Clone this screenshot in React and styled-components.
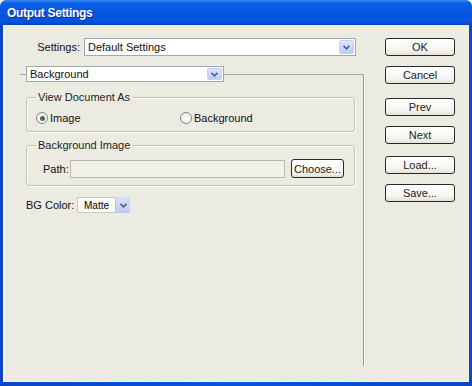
import React from "react";
import styled, { createGlobalStyle } from "styled-components";

const GlobalStyle = createGlobalStyle`
  html, body {
    margin: 0;
    padding: 0;
    overflow: hidden;
    background: #ecebe2;
  }
  * {
    box-sizing: border-box;
  }
`;

const Window = styled.div`
  width: 472px;
  height: 386px;
  display: flex;
  flex-direction: column;
  background: #0a4fd2;
  border-radius: 7px 7px 0 0;
  overflow: hidden;
  font-family: "Liberation Sans", Tahoma, sans-serif;
  font-size: 11px;
  color: #111;
`;

const TitleBar = styled.div`
  height: 25px;
  flex-shrink: 0;
  display: flex;
  align-items: center;
  padding-left: 7px;
  background: linear-gradient(
    to bottom,
    #3a8af6 0%,
    #0b5fe6 12%,
    #0757e0 45%,
    #0553dc 85%,
    #0444c0 100%
  );
  color: #fff;
  font-weight: bold;
  font-size: 12px;
  letter-spacing: -0.3px;
  text-shadow: 1px 1px 0 #0b2a8a;
`;

const Frame = styled.div`
  flex: 1;
  display: flex;
  padding: 0 3px 4px 3px;
  background: linear-gradient(to right, #0a46c8, #0855dc 50%, #0a46c8);
`;

const Body = styled.div`
  flex: 1;
  display: flex;
  background: #ecebe2;
  border-left: 2px solid #f8f7ee;
  border-bottom: 1px solid #f8f7ee;
`;

const Main = styled.div`
  width: 360px;
  display: flex;
  flex-direction: column;
  padding-top: 13px;
  padding-bottom: 15px;
`;

const Side = styled.div`
  flex: 1;
  display: flex;
  flex-direction: column;
  padding-left: 20px;
  padding-top: 13px;
`;

const Row = styled.div`
  display: flex;
  align-items: center;
  margin-left: ${(p) => p.$indent || 0}px;
  margin-top: ${(p) => p.$top || 0}px;
  height: ${(p) => p.$height || 18}px;
`;

const Label = styled.span`
  width: ${(p) => p.$width}px;
  text-align: ${(p) => p.$align || "left"};
  margin-right: ${(p) => p.$gap || 0}px;
  white-space: nowrap;
`;

const SelectBox = styled.div`
  width: ${(p) => p.$width}px;
  height: ${(p) => p.$height}px;
  display: flex;
  align-items: center;
  background: #fff;
  border: 1px solid #9fa8b3;
  padding-left: 3px;
`;

const SelectText = styled.span`
  flex: 1;
  white-space: nowrap;
  overflow: hidden;
`;

const ArrowButton = styled.span`
  width: 15px;
  align-self: stretch;
  margin: 1px;
  display: flex;
  align-items: center;
  justify-content: center;
  border-radius: 2px;
  background: linear-gradient(to bottom, #dbe5fb, #bccdf4);
  border: 1px solid #c3d1f3;
`;

const Chevron = () => (
  <svg width="7" height="5" viewBox="0 0 7 5">
    <path d="M0.5 0.8 L3.5 3.8 L6.5 0.8" fill="none" stroke="#4d6185" strokeWidth="1.6" />
  </svg>
);

const Select = ({ width, height = 18, children }) => (
  <SelectBox $width={width} $height={height}>
    <SelectText>{children}</SelectText>
    <ArrowButton>
      <Chevron />
    </ArrowButton>
  </SelectBox>
);

const Section = styled.fieldset`
  flex: 1;
  margin: 10px 0 0 15px;
  width: 344px;
  min-width: 0;
  padding: 9px 0 0 6px;
  border: none;
  border-top: 1px solid #aaa898;
  border-right: 1px solid #9a988a;
  box-shadow: 1px 0 0 #fff;
  display: flex;
  flex-direction: column;
`;

const SectionLegend = styled.legend`
  padding: 0;
  margin: 0;
`;

const Group = styled.fieldset`
  width: 329px;
  min-width: 0;
  margin: ${(p) => p.$top || 0}px 0 0 0;
  padding: ${(p) => p.$padTop}px 0 ${(p) => p.$padBottom}px 9px;
  border: 1px solid #c5c2b2;
  border-radius: 3px;
  box-shadow: inset 1px 1px 0 #fbfaf4, 1px 1px 0 #fbfaf4;
`;

const GroupLegend = styled.legend`
  padding: 0 2px;
  line-height: 13px;
  color: #222;
`;

const RadioRow = styled.div`
  display: flex;
  align-items: center;
  height: 14px;
`;

const RadioItem = styled.label`
  display: flex;
  align-items: center;
  gap: 2px;
  width: ${(p) => p.$width || "auto"};
`;

const RadioCircle = styled.span`
  width: 12px;
  height: 12px;
  border-radius: 50%;
  border: 1px solid #7e8a95;
  background: radial-gradient(circle at 60% 60%, #fff, #e6e5dc);
  display: flex;
  align-items: center;
  justify-content: center;
  &::after {
    content: "";
    width: 5px;
    height: 5px;
    border-radius: 50%;
    background: ${(p) => (p.$checked ? "#4f6d50" : "transparent")};
  }
`;

const TextInput = styled.div`
  width: ${(p) => p.$width}px;
  height: 18px;
  background: #f1f0e9;
  border: 1px solid #bdbaad;
`;

const Button = styled.div`
  width: ${(p) => p.$width || 70}px;
  height: ${(p) => p.$height || 18}px;
  margin-top: ${(p) => p.$top || 0}px;
  margin-left: ${(p) => p.$left || 0}px;
  display: flex;
  align-items: center;
  justify-content: center;
  border: 1px solid #262b30;
  border-radius: 3px;
  background: linear-gradient(to bottom, #fff 0%, #f6f5ef 70%, #e4e2d6 100%);
  white-space: nowrap;
  color: #222;
`;

const MatteBox = styled.div`
  width: 39px;
  height: 16px;
  display: flex;
  align-items: center;
  justify-content: center;
  background: #fbfbf6;
  border: 1px solid #c9c7bb;
  font-size: 10px;
  color: #000;
`;

const MatteArrow = styled.div`
  width: 14px;
  height: 16px;
  display: flex;
  align-items: center;
  justify-content: center;
  background: linear-gradient(to bottom, #d7e1f8, #bccbef);
`;

export default function App() {
  return (
    <>
      <GlobalStyle />
      <Window>
        <TitleBar>Output Settings</TitleBar>
        <Frame>
          <Body>
            <Main>
              <Row>
                <Label $width={75} $align="right" $gap={4}>
                  Settings:
                </Label>
                <Select width={272}>Default Settings</Select>
              </Row>

              <Section>
                <SectionLegend>
                  <Select width={198} height={16}>
                    Background
                  </Select>
                </SectionLegend>

                <Group $padTop={7} $padBottom={6}>
                  <GroupLegend>View Document As</GroupLegend>
                  <RadioRow>
                    <RadioItem $width="144px">
                      <RadioCircle $checked />
                      Image
                    </RadioItem>
                    <RadioItem>
                      <RadioCircle />
                      Background
                    </RadioItem>
                  </RadioRow>
                </Group>

                <Group $top={7} $padTop={7} $padBottom={7}>
                  <GroupLegend>Background Image</GroupLegend>
                  <Row $height={19} $indent={7}>
                    <Label $width={27}>Path:</Label>
                    <TextInput $width={215} />
                    <Button $width={53} $height={19} $left={6}>
                      Choose...
                    </Button>
                  </Row>
                </Group>

                <Row $top={11} $height={16}>
                  <Label $width={51}>BG Color:</Label>
                  <MatteBox>Matte</MatteBox>
                  <MatteArrow>
                    <Chevron />
                  </MatteArrow>
                </Row>
              </Section>
            </Main>

            <Side>
              <Button>OK</Button>
              <Button $top={10}>Cancel</Button>
              <Button $top={14}>Prev</Button>
              <Button $top={10}>Next</Button>
              <Button $top={12}>Load...</Button>
              <Button $top={10}>Save...</Button>
            </Side>
          </Body>
        </Frame>
      </Window>
    </>
  );
}
